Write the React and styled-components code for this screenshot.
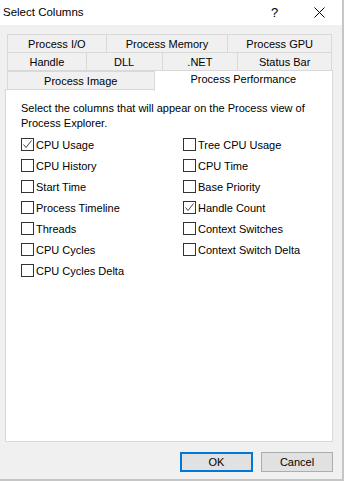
import React from "react"
import styled, { createGlobalStyle } from "styled-components"

const GlobalStyle = createGlobalStyle`
  html, body {
    margin: 0;
    padding: 0;
    background: #c6c6c6;
  }
  body {
    font-family: "Segoe UI", "Liberation Sans", Arial, sans-serif;
    font-size: 11px;
    color: #000;
  }
`

const Dialog = styled.div`
  width: 342px;
  height: 479px;
  background: #f0f0f0;
  display: flex;
  flex-direction: column;
  box-sizing: border-box;
`

const TitleBar = styled.div`
  height: 25px;
  background: #fff;
  display: flex;
  align-items: center;
  padding-left: 3px;
  flex-shrink: 0;
`

const Title = styled.div`
  flex: 1;
  font-size: 11.5px;
  padding-bottom: 1px;
`

const TitleButton = styled.div`
  width: 45px;
  height: 25px;
  display: flex;
  align-items: center;
  justify-content: center;
  font-size: 13px;
  color: #000;
`

const Body = styled.div`
  flex: 1;
  display: flex;
  flex-direction: column;
  padding: 9px 9px 0 5px;
`

const Tabs = styled.div`
  display: flex;
  flex-direction: column;
  position: relative;
  z-index: 1;
`

const TabRow = styled.div`
  display: flex;
  align-items: flex-end;
  margin-left: 2px;
  margin-right: ${(p) => (p.$front ? "0" : "1px")};
  margin-top: -1px;
  &:first-child {
    margin-top: 0;
  }
`

const Tab = styled.div`
  width: ${(p) => p.$w}px;
  height: ${(p) => (p.$active ? 21 : 19)}px;
  margin-left: -1px;
  &:first-child {
    margin-left: 0;
  }
  box-sizing: border-box;
  border: 1px solid #d9d9d9;
  border-bottom: ${(p) => (p.$active ? "none" : "1px solid #d9d9d9")};
  background: ${(p) => (p.$active ? "#fff" : "#f0f0f0")};
  margin-bottom: ${(p) => (p.$active ? "-1px" : "0")};
  position: relative;
  z-index: ${(p) => (p.$active ? 2 : 0)};
  display: flex;
  align-items: ${(p) => (p.$active ? "flex-start" : "center")};
  padding-top: ${(p) => (p.$active ? "2px" : "0")};
  justify-content: center;
  white-space: nowrap;
`

const Panel = styled.div`
  height: 353px;
  box-sizing: border-box;
  background: #fff;
  border: 1px solid #d9d9d9;
  margin-top: -1px;
  padding: 11px 0 0 15px;
`

const Intro = styled.div`
  line-height: 15px;
  margin-bottom: 3px;
`

const Grid = styled.div`
  display: grid;
  grid-template-columns: 162px 150px;
  grid-template-rows: repeat(7, 21px);
  grid-auto-flow: column;
`

const Option = styled.label`
  display: flex;
  align-items: center;
  gap: 2px;
  white-space: nowrap;
`

const Box = styled.span`
  width: 13px;
  height: 13px;
  box-sizing: border-box;
  border: 1px solid #333;
  background: #fff;
  display: flex;
  align-items: center;
  justify-content: center;
  flex-shrink: 0;
`

const Footer = styled.div`
  display: flex;
  justify-content: flex-end;
  gap: 8px;
  padding-top: 10px;
`

const Button = styled.button`
  width: ${(p) => (p.$primary ? 73 : 72)}px;
  height: 20px;
  box-sizing: border-box;
  background: #e1e1e1;
  border: ${(p) => (p.$primary ? "2px solid #0078d7" : "1px solid #adadad")};
  font-family: inherit;
  font-size: 11px;
  color: #000;
  padding: 0;
  display: flex;
  align-items: center;
  justify-content: center;
`

const Check = () => (
  <svg width="11" height="11" viewBox="0 0 11 11">
    <polyline points="1.5,5.5 4,8.5 9.5,1.5" fill="none" stroke="#444" strokeWidth="1" />
  </svg>
)

const Checkbox = ({ label, checked }) => (
  <Option>
    <Box>{checked && <Check />}</Box>
    {label}
  </Option>
)

const options = [
  ["CPU Usage", true],
  ["CPU History", false],
  ["Start Time", false],
  ["Process Timeline", false],
  ["Threads", false],
  ["CPU Cycles", false],
  ["CPU Cycles Delta", false],
  ["Tree CPU Usage", false],
  ["CPU Time", false],
  ["Base Priority", false],
  ["Handle Count", true],
  ["Context Switches", false],
  ["Context Switch Delta", false],
]

const CloseIcon = () => (
  <svg width="11" height="11" viewBox="0 0 11 11">
    <path d="M0.5 0.5 L10.5 10.5 M10.5 0.5 L0.5 10.5" stroke="#000" strokeWidth="1" />
  </svg>
)

export default function App() {
  return (
    <>
      <GlobalStyle />
      <Dialog>
        <TitleBar>
          <Title>Select Columns</Title>
          <TitleButton>?</TitleButton>
          <TitleButton>
            <CloseIcon />
          </TitleButton>
        </TitleBar>
        <Body>
          <Tabs>
            <TabRow>
              <Tab $w={100}>Process I/O</Tab>
              <Tab $w={123}>Process Memory</Tab>
              <Tab $w={105}>Process GPU</Tab>
            </TabRow>
            <TabRow>
              <Tab $w={80}>Handle</Tab>
              <Tab $w={77}>DLL</Tab>
              <Tab $w={77}>.NET</Tab>
              <Tab $w={95}>Status Bar</Tab>
            </TabRow>
            <TabRow $front>
              <Tab $w={148}>Process Image</Tab>
              <Tab $w={180} $active>
                Process Performance
              </Tab>
            </TabRow>
          </Tabs>
          <Panel>
            <Intro>
              Select the columns that will appear on the Process view of
              <br />
              Process Explorer.
            </Intro>
            <Grid>
              {options.map(([label, checked]) => (
                <Checkbox key={label} label={label} checked={checked} />
              ))}
            </Grid>
          </Panel>
          <Footer>
            <Button $primary>OK</Button>
            <Button>Cancel</Button>
          </Footer>
        </Body>
      </Dialog>
    </>
  )
}
